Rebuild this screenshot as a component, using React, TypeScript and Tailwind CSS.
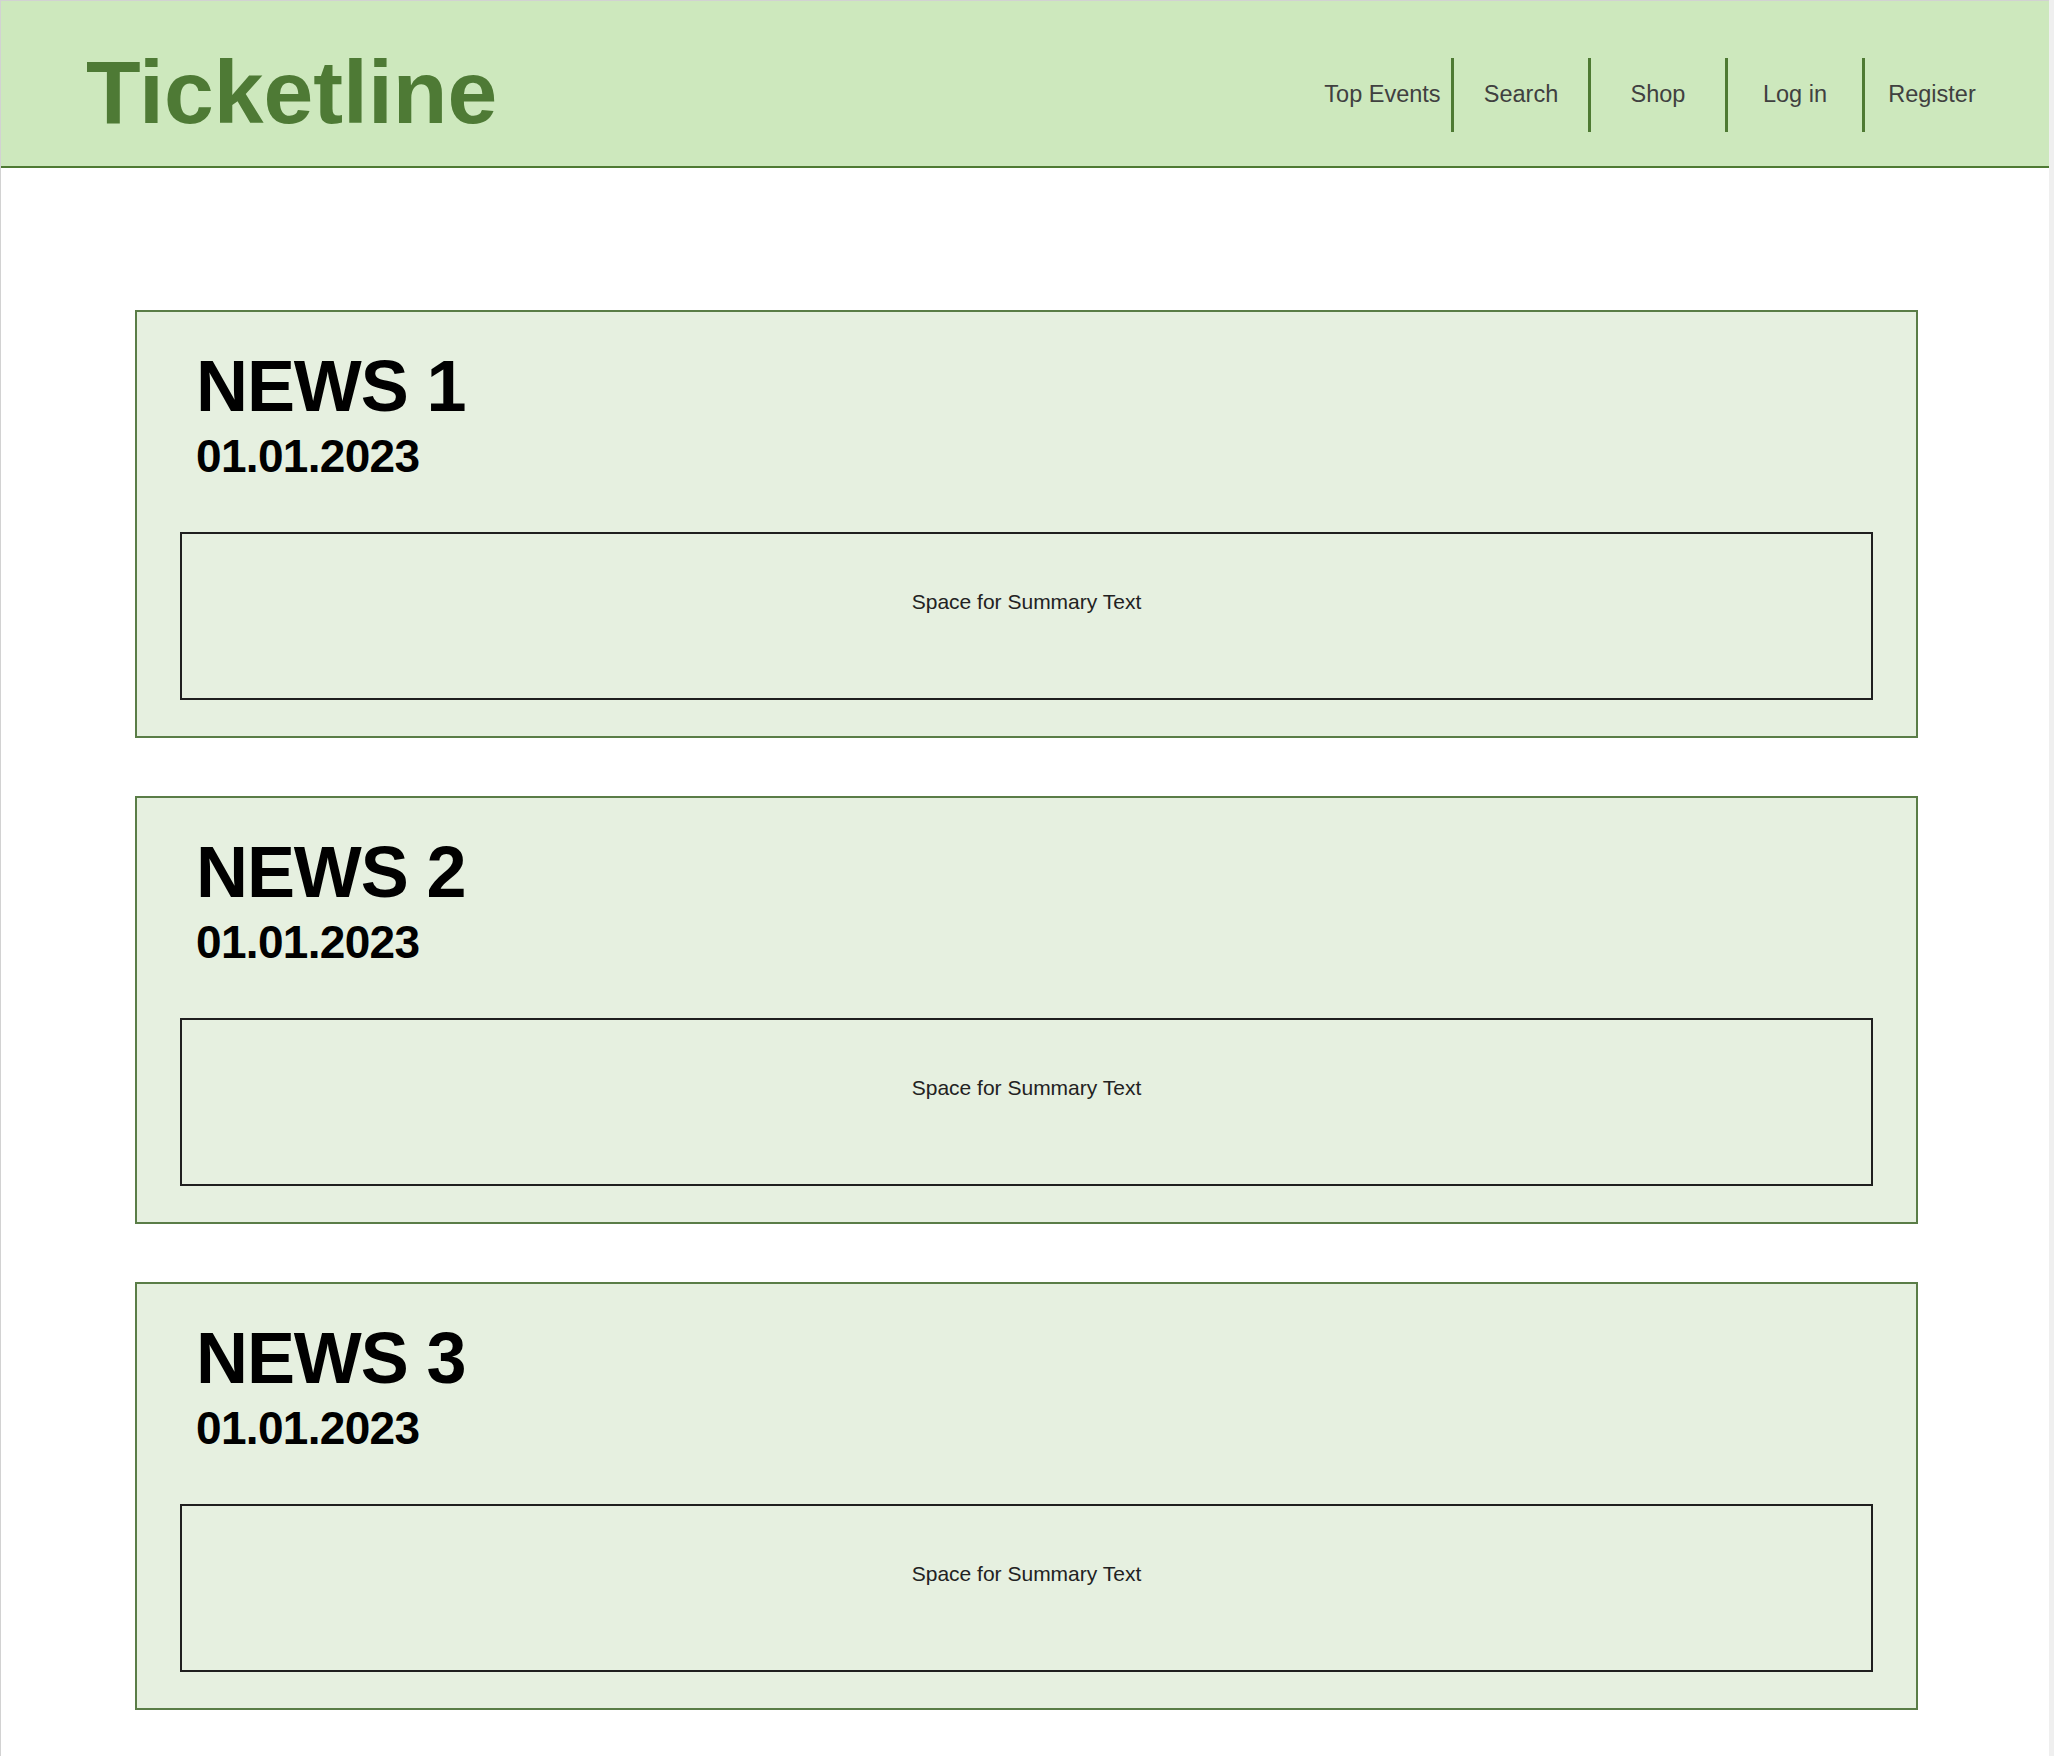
import React from 'react';

const navItems = ['Top Events', 'Search', 'Shop', 'Log in', 'Register'];
const news = [1, 2, 3];

const App = () => {
    return (
        <div className="min-h-screen w-full bg-[#efefef] font-['Liberation_Sans',Arial,sans-serif]">
            <div className="mr-[5px] min-h-screen bg-white border-t border-l border-[#d2d2d2]">
                {/* Header */}
                <header className="h-[167px] box-border flex items-center justify-between pt-[19px] pl-[85px] pr-[50px] bg-[#cde8bd] border-b-2 border-[#4e7a33]">
                    <h1 className="text-[89.5px] leading-none font-bold text-[#4e7a35]">Ticketline</h1>
                    <nav className="flex pt-[3px]">
                        {navItems.map((item, index) => (
                            <a
                                key={item}
                                href="#"
                                className={`w-[137px] h-[74px] flex items-center justify-center text-[23.5px] text-[#404040] ${
                                    index === 0 ? '' : 'border-l-[3px] border-[#4e7a33]'
                                }`}
                            >
                                {item}
                            </a>
                        ))}
                    </nav>
                </header>

                {/* News cards */}
                <main className="pt-[142px] pb-[46px] pl-[134px] pr-[131px] flex flex-col gap-[58px]">
                    {news.map((n) => (
                        <section
                            key={n}
                            className="bg-[#e6f0e0] border-2 border-[#5a7d47] pt-[38px] pb-[36px] px-[43px]"
                        >
                            <div className="pl-[16px]">
                                <h2 className="text-[72px] leading-none font-bold tracking-[-0.015em] text-black">NEWS {n}</h2>
                                <p className="mt-[11px] text-[46px] leading-none font-bold tracking-[-0.015em] text-black">01.01.2023</p>
                            </div>
                            <div className="mt-[53px] h-[168px] border-2 border-[#1f1f1f] pt-[56px] text-center">
                                <span className="text-[21px] leading-[24px] text-[#222222]">Space for Summary Text</span>
                            </div>
                        </section>
                    ))}
                </main>
            </div>
        </div>
    );
};

export default App;
